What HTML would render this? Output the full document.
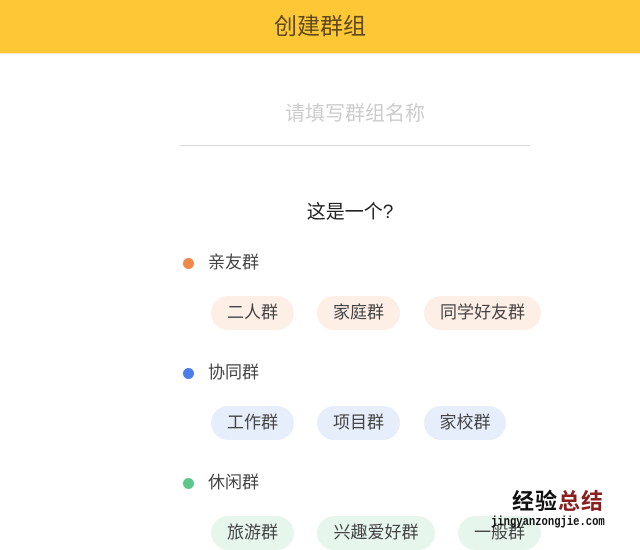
<!DOCTYPE html>
<html><head><meta charset="utf-8"><style>
*{margin:0;padding:0;box-sizing:border-box}
body{width:640px;height:540px;overflow:hidden;background:#fff;position:relative;font-family:"Liberation Sans","Noto Sans CJK SC",sans-serif;color:#444}
.hd{position:absolute;left:0;top:0;width:640px;height:54px;background:#fdc736;border-bottom:1px solid #f3e6c0}
.hd span{position:absolute;left:0;right:0;top:12px;text-align:center;font-size:23px;line-height:28px;color:#5e4a1c}
.ph{position:absolute;left:180px;width:350px;top:100px;text-align:center;font-size:20px;line-height:28px;color:#ccc}
.ln{position:absolute;left:180px;width:350px;top:145px;height:1px;background:#d6d6d6}
.q{position:absolute;left:0;right:0;top:200px;padding-left:60px;text-align:center;font-size:19px;line-height:26px;color:#222}
.dot{position:absolute;left:183px;width:11px;height:11px;border-radius:50%}
.lb{position:absolute;left:208px;font-size:17px;line-height:22px;color:#444}
.p{position:absolute;height:34px;border-radius:17px;font-size:17px;line-height:34px;text-align:center;color:#444}
.o{background:#fdeee6}.b{background:#e6eefc}.g{background:#e7f6ed}
.wm1{position:absolute;left:512px;top:489px;font-size:22px;font-weight:bold;line-height:26px;letter-spacing:1px;color:#111}
.wm1 i{font-style:normal;color:#8b1e1e}
.wm2{position:absolute;left:491px;top:514px;font-family:"Liberation Mono",monospace;font-weight:bold;font-size:13px;line-height:16px;color:#111;transform:scaleX(0.81);transform-origin:0 0;white-space:nowrap}
</style></head><body>
<div class="hd"><span>创建群组</span></div>
<div class="ph">请填写群组名称</div>
<div class="ln"></div>
<div class="q">这是一个?</div>

<div class="dot" style="top:258px;background:#f0884a"></div>
<div class="lb" style="top:252px">亲友群</div>
<div class="p o" style="left:211px;top:296px;width:83px">二人群</div>
<div class="p o" style="left:317px;top:296px;width:83px">家庭群</div>
<div class="p o" style="left:424px;top:296px;width:117px">同学好友群</div>

<div class="dot" style="top:368px;background:#4a7ee8"></div>
<div class="lb" style="top:362px">协同群</div>
<div class="p b" style="left:211px;top:406px;width:83px">工作群</div>
<div class="p b" style="left:317px;top:406px;width:83px">项目群</div>
<div class="p b" style="left:424px;top:406px;width:82px">家校群</div>

<div class="dot" style="top:478px;background:#5cc98b"></div>
<div class="lb" style="top:472px">休闲群</div>
<div class="p g" style="left:211px;top:516px;width:83px">旅游群</div>
<div class="p g" style="left:317px;top:516px;width:118px">兴趣爱好群</div>
<div class="p g" style="left:458px;top:516px;width:83px">一般群</div>

<div class="wm1">经验<i>总结</i></div>
<div class="wm2">jingyanzongjie.com</div>
</body></html>
